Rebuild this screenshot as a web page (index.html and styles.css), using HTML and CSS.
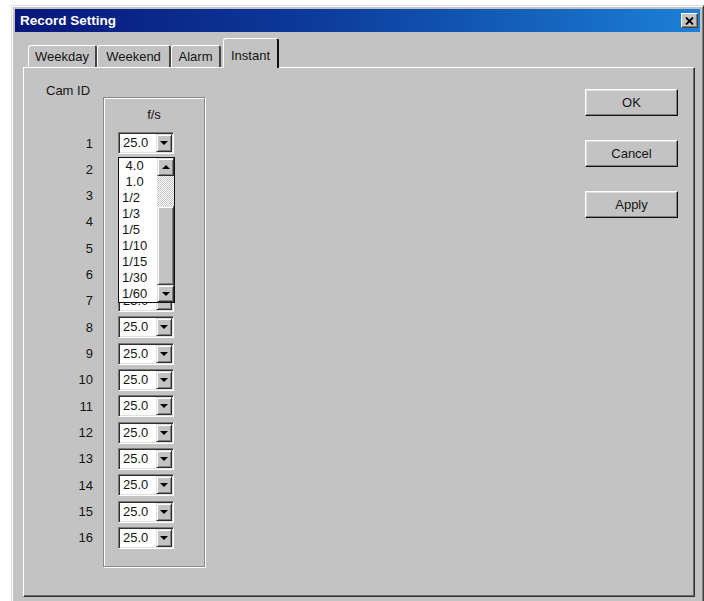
FILE: index.html
```html
<!DOCTYPE html>
<html lang="en">
<head>
<meta charset="utf-8">
<title>Record Setting</title>
<link rel="stylesheet" href="styles.css">
</head>
<body>
<div class="window">
  <div class="titlebar">
    <span class="title">Record Setting</span>
    <span class="close"><svg width="9" height="8" viewBox="0 0 9 8"><path d="M1 0.5l7 7M8 0.5l-7 7" stroke="#000" stroke-width="1.8" fill="none"/></svg></span>
  </div>
  <div class="content">
    <div class="tabs">
      <div class="tab tab-weekday">Weekday</div>
      <div class="tab tab-weekend">Weekend</div>
      <div class="tab tab-alarm">Alarm</div>
      <div class="tab tab-instant active">Instant</div>
    </div>
    <div class="panel">
      <div class="left">
        <div class="camid">Cam ID</div>
        <div class="group">
          <div class="fs">f/s</div>
          <div class="rows">
            <div class="row"><span class="num">1</span>
              <div class="combo"><span class="val">25.0</span><span class="arrow down"></span>
                <div class="dropdown">
                  <div class="opts">
                    <div class="opt">&nbsp;4.0</div>
                    <div class="opt">&nbsp;1.0</div>
                    <div class="opt">1/2</div>
                    <div class="opt">1/3</div>
                    <div class="opt">1/5</div>
                    <div class="opt">1/10</div>
                    <div class="opt">1/15</div>
                    <div class="opt">1/30</div>
                    <div class="opt">1/60</div>
                  </div>
                  <div class="sb">
                    <span class="arrow sb-btn up"></span>
                    <span class="track"></span>
                    <span class="thumb"></span>
                    <span class="arrow sb-btn down"></span>
                  </div>
                </div>
              </div>
            </div>
            <div class="row"><span class="num">2</span><div class="combo"><span class="val">25.0</span><span class="arrow down"></span></div></div>
            <div class="row"><span class="num">3</span><div class="combo"><span class="val">25.0</span><span class="arrow down"></span></div></div>
            <div class="row"><span class="num">4</span><div class="combo"><span class="val">25.0</span><span class="arrow down"></span></div></div>
            <div class="row"><span class="num">5</span><div class="combo"><span class="val">25.0</span><span class="arrow down"></span></div></div>
            <div class="row"><span class="num">6</span><div class="combo"><span class="val">25.0</span><span class="arrow down"></span></div></div>
            <div class="row"><span class="num">7</span><div class="combo"><span class="val">25.0</span><span class="arrow down"></span></div></div>
            <div class="row"><span class="num">8</span><div class="combo"><span class="val">25.0</span><span class="arrow down"></span></div></div>
            <div class="row"><span class="num">9</span><div class="combo"><span class="val">25.0</span><span class="arrow down"></span></div></div>
            <div class="row"><span class="num">10</span><div class="combo"><span class="val">25.0</span><span class="arrow down"></span></div></div>
            <div class="row"><span class="num">11</span><div class="combo"><span class="val">25.0</span><span class="arrow down"></span></div></div>
            <div class="row"><span class="num">12</span><div class="combo"><span class="val">25.0</span><span class="arrow down"></span></div></div>
            <div class="row"><span class="num">13</span><div class="combo"><span class="val">25.0</span><span class="arrow down"></span></div></div>
            <div class="row"><span class="num">14</span><div class="combo"><span class="val">25.0</span><span class="arrow down"></span></div></div>
            <div class="row"><span class="num">15</span><div class="combo"><span class="val">25.0</span><span class="arrow down"></span></div></div>
            <div class="row"><span class="num">16</span><div class="combo"><span class="val">25.0</span><span class="arrow down"></span></div></div>
          </div>
        </div>
      </div>
      <div class="buttons">
        <button class="btn">OK</button>
        <button class="btn">Cancel</button>
        <button class="btn">Apply</button>
      </div>
    </div>
  </div>
</div>
</body>
</html>
```
FILE: styles.css
```css
* { box-sizing: border-box; }

html, body { margin: 0; }

body {
  width: 704px;
  height: 601px;
  overflow: hidden;
  background: #fff;
  font-family: "Liberation Sans", Arial, sans-serif;
  font-size: 13px;
  color: #151515;
}

/* dialog frame */
.window {
  margin: 5px 0 0 11px;
  width: 693px;
  height: 600px;
  background: #c3c3c3;
  border: 1px solid;
  border-color: #dfdfdf #404040 #404040 #dfdfdf;
  box-shadow: inset 1px 1px #fff, inset -1px -1px #808080;
  padding: 3px;
  display: flex;
  flex-direction: column;
}

.titlebar {
  flex: none;
  height: 23px;
  display: flex;
  align-items: center;
  justify-content: space-between;
  padding: 0 2px 0 5px;
  background: linear-gradient(to right, #08167a 0%, #0c3c9c 45%, #1c80d6 100%);
  color: #fff;
  font-weight: bold;
  font-size: 13.5px;
}

.close {
  width: 17px;
  height: 15px;
  display: flex;
  align-items: center;
  justify-content: center;
  background: #c3c3c3;
  border: 1px solid;
  border-color: #fff #404040 #404040 #fff;
  box-shadow: inset -1px -1px #808080;
}

.content {
  flex: 1;
  display: flex;
  flex-direction: column;
  padding: 6px 5px 4px 8px;
}

/* tab strip */
.tabs {
  flex: none;
  height: 29px;
  display: flex;
  align-items: flex-end;
  padding-left: 5px;
  position: relative;
  z-index: 1;
}

.tab {
  height: 22px;
  padding-top: 3px;
  line-height: 16px;
  text-align: center;
  background: #c3c3c3;
  border-top: 1px solid #fff;
  border-left: 1px solid #fff;
  border-right: 2px solid #454545;
  border-radius: 3px 3px 0 0;
}

.tab-weekday { width: 69px; }
.tab-weekend { width: 74px; }
.tab-alarm { width: 50px; }

.tab.active {
  width: 56px;
  height: 30px;
  margin-left: 2px;
  margin-bottom: -1px;
  padding-top: 9px;
  border-right-color: #111;
}

/* tab page */
.panel {
  flex: 1;
  display: flex;
  justify-content: space-between;
  border: 1px solid;
  border-color: #fff #333 #333 #fff;
  box-shadow: inset -1px -1px #6a6a6a;
}

.left {
  display: flex;
  align-items: flex-start;
  padding: 15px 0 0 22px;
}

.camid {
  width: 57px;
  line-height: 16px;
}

.group {
  margin-top: 14px;
  width: 102px;
  height: 470px;
  border: 1px solid #8a8a8a;
  box-shadow: inset 1px 1px #fff, 1px 1px #fff;
  padding-top: 9px;
}

.fs {
  line-height: 16px;
  text-align: center;
  margin-bottom: 9px;
}

.rows {
  display: flex;
  flex-direction: column;
  gap: 4.33px;
}

.row {
  display: flex;
  align-items: center;
  height: 22px;
}

.num {
  width: 30px;
  margin-left: -41px;
  margin-right: 25px;
  text-align: right;
}

/* drop-down combo */
.combo {
  position: relative;
  display: flex;
  width: 56px;
  height: 22px;
  padding: 1px;
  background: #fff;
  border: 1px solid;
  border-color: #7a7a7a #fff #fff #7a7a7a;
  box-shadow: inset 1px 1px #303030, inset -1px -1px #dfdfdf;
}

.val {
  flex: 1;
  padding-left: 3px;
  line-height: 18px;
}

.arrow {
  flex: none;
  width: 16px;
  height: 18px;
  display: flex;
  align-items: center;
  justify-content: center;
  background: #c3c3c3;
  border: 1px solid;
  border-color: #dfdfdf #303030 #303030 #dfdfdf;
  box-shadow: inset 1px 1px #fff, inset -1px -1px #808080;
}

.arrow::after {
  content: "";
  width: 0;
  height: 0;
  border-left: 4px solid transparent;
  border-right: 4px solid transparent;
}

.arrow.down::after { border-top: 4px solid #000; }
.arrow.up::after { border-bottom: 4px solid #000; }

/* open list of the first combo */
.dropdown {
  position: absolute;
  left: -1px;
  top: 24px;
  width: 57px;
  height: 146px;
  display: flex;
  background: #fff;
  border: 1px solid #111;
  z-index: 2;
}

.opts { flex: 1; }

.opt {
  height: 16px;
  line-height: 16px;
  padding-left: 3px;
}

.sb {
  flex: none;
  width: 17px;
  display: flex;
  flex-direction: column;
}

.sb-btn {
  width: 17px;
  height: 18px;
}

.sb-btn.down { height: 17px; }

.track {
  height: 30px;
  background: repeating-conic-gradient(#c3c3c3 0 25%, #fff 0 50%) 0 0 / 2px 2px;
}

.thumb {
  flex: 1;
  background: #c3c3c3;
  border: 1px solid;
  border-color: #dfdfdf #404040 #404040 #dfdfdf;
  box-shadow: inset 1px 1px #fff, inset -1px -1px #808080;
}

/* command buttons */
.buttons {
  display: flex;
  flex-direction: column;
  gap: 24px;
  padding: 21px 16px 0 0;
}

.btn {
  width: 93px;
  height: 27px;
  padding: 0;
  font: inherit;
  color: inherit;
  background: #c3c3c3;
  border: 1px solid;
  border-color: #fff #111 #111 #fff;
  box-shadow: inset -1px -1px #808080, inset 1px 1px #dfdfdf;
}
```
